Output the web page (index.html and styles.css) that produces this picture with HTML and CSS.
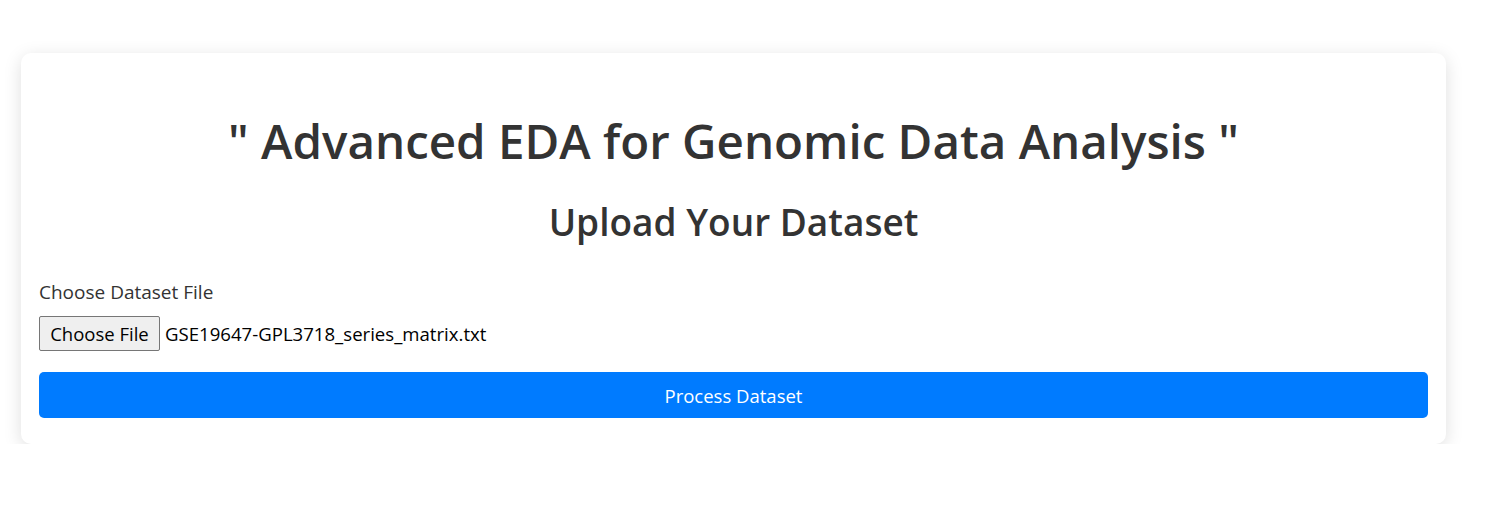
FILE: index.html
```html
<!DOCTYPE html>
<html>
<head>
<meta charset="utf-8">
<link rel="stylesheet" href="styles.css">
</head>
<body>
<div class="card">
  <h1 class="title">" Advanced EDA for Genomic Data Analysis "</h1>
  <h2 class="subtitle">Upload Your Dataset</h2>
  <form class="form">
    <label class="label">Choose Dataset File</label>
    <div class="file-row">
      <span class="file-btn">Choose File</span>
      <span class="file-name">GSE19647-GPL3718_series_matrix.txt</span>
    </div>
    <button type="button" class="submit">Process Dataset</button>
  </form>
</div>
</body>
</html>
```
FILE: styles.css
```css
html, body {
  margin: 0;
  padding: 0;
  background: #ffffff;
}
body {
  font-family: "Open Sans", "Noto Sans", sans-serif;
  color: #333333;
  padding-top: 53px;
}
.card {
  margin-left: 21px;
  width: 1425px;
  box-sizing: border-box;
  background: #fff;
  border-radius: 10px;
  box-shadow: 0 4px 18px rgba(0, 0, 0, 0.13);
  padding: 53px 18px 26px 18px;
}
.title {
  margin: 0;
  text-align: center;
  font-size: 47.5px;
  font-weight: 600;
  line-height: 70px;
  color: #333;
}
.subtitle {
  margin: 21px 0 0 0;
  text-align: center;
  font-size: 37px;
  font-weight: 600;
  line-height: 50px;
  color: #333;
}
.form {
  margin-top: 33px;
  display: flex;
  flex-direction: column;
}
.label {
  font-size: 19px;
  line-height: 24px;
  color: #333;
}
.file-row {
  margin-top: 12px;
  display: flex;
  align-items: center;
  gap: 5px;
}
.file-btn {
  box-sizing: border-box;
  height: 35px;
  width: 121px;
  display: flex;
  align-items: center;
  justify-content: center;
  background: #efefef;
  border: 1px solid #767676;
  border-radius: 2px;
  font-size: 18.5px;
  color: #000;
}
.file-name {
  font-size: 18.6px;
  color: #000;
}
.submit {
  margin-top: 21px;
  height: 46px;
  border: none;
  border-radius: 5px;
  background: #007bff;
  color: #fff;
  font-family: inherit;
  font-size: 18.5px;
}
```
